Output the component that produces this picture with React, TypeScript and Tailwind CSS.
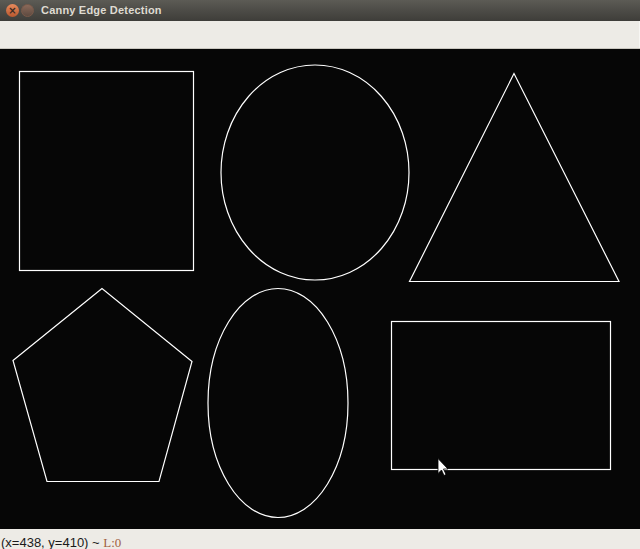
import React from "react";

export default function App() {
  return (
    <div className="w-[640px] h-[549px] flex flex-col overflow-hidden bg-[#edebe6]">
      {/* Title bar */}
      <div className="h-[21px] shrink-0 flex items-center bg-gradient-to-b from-[#5c5b55] to-[#3e3d39] relative">
        <div className="ml-[6px] w-[13px] h-[13px] rounded-full bg-gradient-to-b from-[#e88a5c] to-[#b9582f] flex items-center justify-center text-[#3a2a22] text-[10px] leading-none font-bold" style={{ fontFamily: "'DejaVu Sans', sans-serif" }}>
          ×
        </div>
        <div className="ml-[2px] w-[13px] h-[13px] rounded-full bg-gradient-to-b from-[#8b6a5a] to-[#5e4a40] border border-[#7a5a4a]" />
        <span className="ml-[7px] text-[11px] font-bold text-[#dfdbd2] tracking-[0.2px]" style={{ fontFamily: "'Liberation Sans', Arial, sans-serif" }}>
          Canny Edge Detection
        </span>
      </div>
      {/* Toolbar */}
      <div className="h-[27px] shrink-0 bg-[#edebe6] border-r border-[#f7f6f3]" />
      <div className="h-[1px] shrink-0 bg-[#c9c6bf]" />
      {/* Canvas */}
      <div className="h-[480px] shrink-0 bg-[#060606] relative">
        <svg width="640" height="480" viewBox="0 0 640 480" className="block">
          <g fill="none" stroke="#ffffff" strokeWidth="1.2">
            <rect x="19.5" y="22.5" width="174" height="199" />
            <ellipse cx="315" cy="123.5" rx="94" ry="107.5" />
            <polygon points="514,24.5 409.5,232.5 619,232.5" />
            <polygon points="102,239.5 13,311.5 47,432.5 159,432.5 192,312.5" />
            <ellipse cx="278" cy="354" rx="70" ry="114.5" />
            <rect x="391.5" y="272.5" width="219" height="148" />
          </g>
          <path d="M438,409.5 L438,424.5 L441.5,421 L444,426.5 L446,425.5 L443.5,420 L448,420 Z" fill="#ffffff" stroke="#000000" strokeWidth="0.8" />
        </svg>
      </div>
      {/* Status bar */}
      <div className="flex-1 bg-[#edebe6] flex items-start pt-[6px] pl-[1px] text-[13px] leading-[15px] whitespace-pre" style={{ fontFamily: "'Liberation Sans', Arial, sans-serif" }}>
        <span className="text-[#1a1a1a]">(x=438, y=410) ~ </span>
        <span className="text-[#a0603f]" style={{ fontFamily: "'Liberation Serif', serif" }}>L:0</span>
      </div>
    </div>
  );
}
